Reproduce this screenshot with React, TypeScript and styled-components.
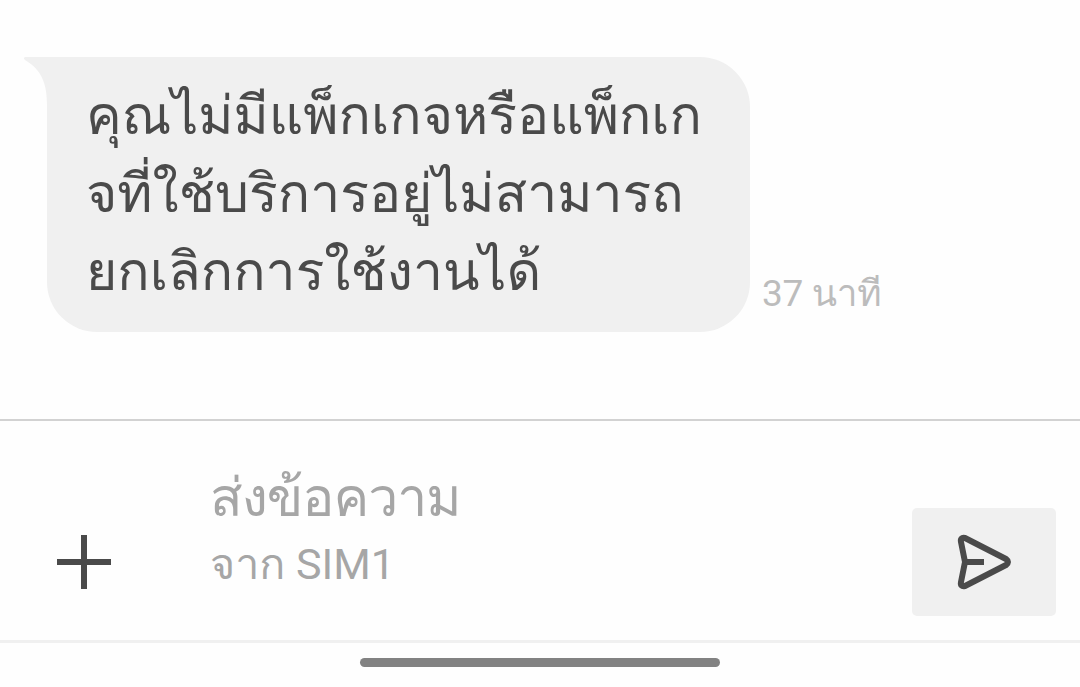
import React from 'react';
import styled, { createGlobalStyle } from 'styled-components';

const GlobalStyle = createGlobalStyle`
  body {
    margin: 0;
    background: #fefefe;
    font-family: Roboto, Loma, sans-serif;
  }
`;

const Screen = styled.div`
  width: 1080px;
  height: 687px;
  display: flex;
  flex-direction: column;
  overflow: hidden;
`;

const Conversation = styled.div`
  box-sizing: border-box;
  height: 419px;
  padding: 57px 0 0 47px;
  display: flex;
  align-items: flex-start;
`;

const Bubble = styled.div`
  position: relative;
  box-sizing: border-box;
  width: 703px;
  height: 275px;
  padding: 20px 39px;
  border-radius: 0 50px 50px 50px;
  background: #f0f0f0;
`;

const Tail = styled.svg`
  position: absolute;
  top: 0;
  left: -23px;
`;

const MessageLine = styled.div`
  height: 78px;
  line-height: 78px;
  font-size: 53.5px;
  color: #4a4a4a;
  white-space: nowrap;
`;

const Timestamp = styled.div`
  margin: 213px 0 0 12px;
  font-size: 37px;
  line-height: 48px;
  letter-spacing: -0.3px;
  color: #bcbcbc;
  white-space: nowrap;
`;

const Composer = styled.div`
  box-sizing: border-box;
  height: 224px;
  padding: 0 24px 0 57px;
  display: flex;
  border-top: 2px solid #d2d2d2;
  border-bottom: 3px solid #f0f0f0;
`;

const AddButton = styled.svg`
  margin-top: 114px;
`;

const Field = styled.div`
  flex: 1;
  margin: 42px 0 0 99px;
  color: #a6a6a6;
  white-space: nowrap;
`;

const Placeholder = styled.div`
  font-size: 53.5px;
  line-height: 70px;
  letter-spacing: -1px;
`;

const SimLabel = styled.div`
  font-size: 43px;
  line-height: 62px;
`;

const SendButton = styled.div`
  width: 144px;
  height: 108px;
  margin-top: 87px;
  display: flex;
  align-items: center;
  justify-content: center;
  border-radius: 5px;
  background: #f0f0f0;
`;

const HomeBar = styled.div`
  width: 360px;
  height: 9px;
  margin: 15px auto 0;
  border-radius: 5px;
  background: #828282;
`;

const message = ['คุณไม่มีแพ็กเกจหรือแพ็กเก', 'จที่ใช้บริการอยู่ไม่สามารถ', 'ยกเลิกการใช้งานได้'];

const App = () => {
  return (
    <Screen>
      <GlobalStyle />
      <Conversation>
        <Bubble>
          <Tail width="24" height="52" viewBox="0 0 24 52">
            <path d="M2 0H24V52H23V48C23 27 18 13 1 3C-1 1 0 0 2 0Z" fill="#f0f0f0" />
          </Tail>
          {message.map((line, index) => (
            <MessageLine key={index}>{line}</MessageLine>
          ))}
        </Bubble>
        <Timestamp>37 นาที</Timestamp>
      </Conversation>
      <Composer>
        <AddButton width="54" height="54" viewBox="0 0 54 54">
          <path d="M27 0V54M0 27H54" stroke="#4a4a4a" strokeWidth="6" />
        </AddButton>
        <Field>
          <Placeholder>ส่งข้อความ</Placeholder>
          <SimLabel>จาก SIM1</SimLabel>
        </Field>
        <SendButton>
          <svg width="56" height="56" viewBox="0 0 56 56" fill="none" stroke="#4a4a4a" strokeWidth="6">
            <path d="M5 8L9 28L5 48Q4 53 9 52L50 31Q54 28 50 25L9 4Q4 3 5 8Z" strokeLinejoin="round" />
            <path d="M9 28H28" />
          </svg>
        </SendButton>
      </Composer>
      <HomeBar />
    </Screen>
  );
};

export default App;
